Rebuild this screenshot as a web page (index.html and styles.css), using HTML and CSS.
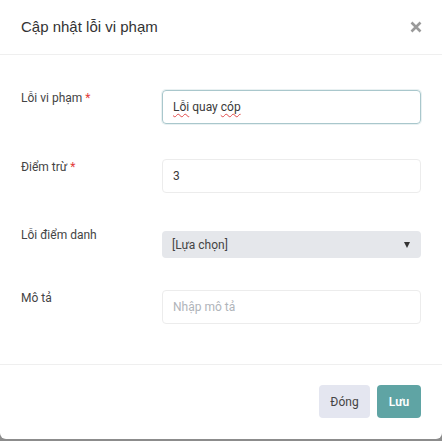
FILE: index.html
```html
<!DOCTYPE html>
<html lang="vi">
<head>
<meta charset="utf-8">
<title>Cập nhật lỗi vi phạm</title>
<link rel="stylesheet" href="styles.css">
</head>
<body>
<div class="modal">
  <div class="modal-header">
    <h1 class="modal-title">Cập nhật lỗi vi phạm</h1>
    <button class="close" type="button" aria-label="Close">
      <svg width="12" height="12" viewBox="0 0 12 12"><path d="M1.5 1.5 L10.5 10.5 M10.5 1.5 L1.5 10.5" stroke="#9a9a9a" stroke-width="2.6" stroke-linecap="butt"/></svg>
    </button>
  </div>
  <div class="modal-body">
    <div class="row">
      <label class="label">Lỗi vi phạm <span class="req">*</span></label>
      <div class="field input focused"><span class="sp">Lỗi</span> quay <span class="sp">cóp</span></div>
    </div>
    <div class="row">
      <label class="label">Điểm trừ <span class="req">*</span></label>
      <div class="field input">3</div>
    </div>
    <div class="row row-select">
      <label class="label">Lỗi điểm danh</label>
      <div class="field select"><span>[Lựa chọn]</span><span class="caret"></span></div>
    </div>
    <div class="row">
      <label class="label">Mô tả</label>
      <div class="field input placeholder">Nhập mô tả</div>
    </div>
  </div>
  <div class="modal-footer">
    <button class="btn btn-close" type="button">Đóng</button>
    <button class="btn btn-save" type="button">Lưu</button>
  </div>
</div>
</body>
</html>
```
FILE: styles.css
```css
html, body {
  margin: 0;
  padding: 0;
}
body {
  background: #8c8c8c;
  width: 442px;
  height: 441px;
  overflow: hidden;
  font-family: Roboto, "Liberation Sans", Arial, sans-serif;
  color: #333;
}
.modal {
  background: #fff;
  height: 439px;
  border-radius: 0 0 6px 6px;
  display: flex;
  flex-direction: column;
}
.modal-header {
  height: 54px;
  border-bottom: 1px solid #efefef;
  display: flex;
  align-items: center;
  justify-content: space-between;
  padding: 0 21px;
}
.modal-title {
  margin: 0;
  font-family: "Liberation Sans", Arial, sans-serif;
  font-size: 15px;
  font-weight: normal;
  color: #333;
  padding-bottom: 1px;
}
.close {
  border: 0;
  background: none;
  padding: 0;
  margin-right: -1px;
  display: flex;
  cursor: pointer;
}
.modal-body {
  flex: 1;
  padding: 35px 21px 0 21px;
  display: flex;
  flex-direction: column;
  gap: 35px;
}
.row {
  display: flex;
  align-items: flex-start;
}
.label {
  width: 141px;
  font-size: 12px;
  padding-top: 1px;
  color: #444;
}
.req {
  color: #e23b3b;
}
.field {
  flex: 1;
  box-sizing: border-box;
  font-size: 12px;
  color: #3a3a3a;
  border-radius: 4px;
  display: flex;
  align-items: center;
}
.input {
  height: 34px;
  border: 1px solid #ececec;
  padding: 0 10px;
  white-space: pre;
}
.input.focused {
  border-color: #a9c7cc;
  box-shadow: 0 0 0 1px rgba(169, 199, 204, 0.25);
}
.sp {
  text-decoration: underline wavy #e14b4b;
  text-decoration-thickness: 1px;
  text-underline-offset: 2px;
}
.placeholder {
  color: #b0b4ba;
}
.row-select {
  margin-bottom: -3px;
}
.row-select .label {
  padding-top: 0;
}
.select {
  height: 27px;
  margin-top: 3px;
  background: #e5e7eb;
  padding: 0 10px;
  justify-content: space-between;
  color: #444;
}
.caret {
  width: 0;
  height: 0;
  border-left: 3.5px solid transparent;
  border-right: 3.5px solid transparent;
  border-top: 6px solid #333;
  margin-right: 1px;
}
.modal-footer {
  height: 75px;
  border-top: 1px solid #efefef;
  box-sizing: border-box;
  display: flex;
  justify-content: flex-end;
  align-items: flex-start;
  gap: 7px;
  padding: 20px 21px 0 0;
}
.btn {
  height: 33px;
  border: 0;
  border-radius: 4px;
  font-family: Roboto, "Liberation Sans", sans-serif;
  font-size: 12px;
  cursor: pointer;
}
.btn-close {
  width: 51px;
  background: #e4e6f0;
  color: #444;
}
.btn-save {
  width: 44px;
  background: #5fa4a4;
  color: #fff;
  font-weight: 600;
}
```
